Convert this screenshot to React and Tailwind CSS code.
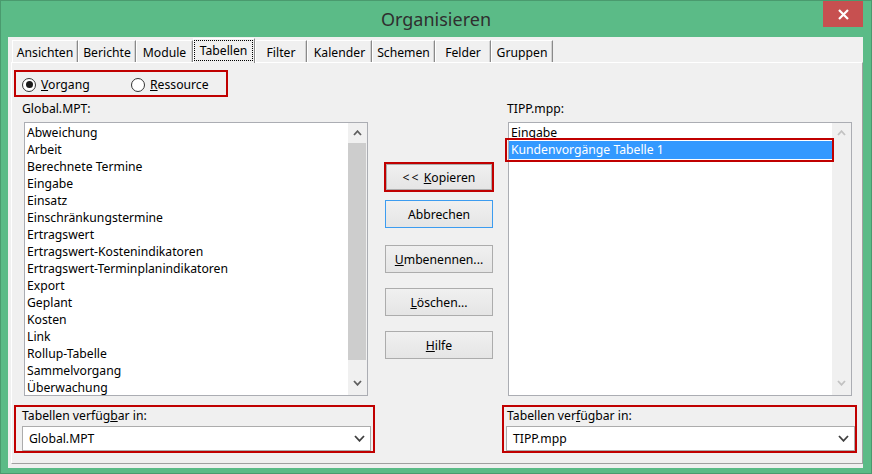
import React from "react";

function Chev({ up = false, color = "#606060", w = 9, h = 6, sw = 1.8 }) {
  return (
    <svg width={w} height={h} viewBox={`0 0 ${w} ${h}`} className="block">
      <polyline
        points={up ? `1,${h - 1} ${w / 2},1.2 ${w - 1},${h - 1}` : `1,1 ${w / 2},${h - 1.2} ${w - 1},1`}
        fill="none"
        stroke={color}
        strokeWidth={sw}
      />
    </svg>
  );
}

function Scrollbar({ disabled = false }) {
  const c = disabled ? "#c2c2c2" : "#5f5f5f";
  return (
    <div className="flex w-[19px] flex-col bg-[#f0f0f0]">
      <div className="flex h-[20px] items-center justify-center">
        <Chev up color={c} />
      </div>
      {!disabled && <div className="h-[217px] w-[18px] bg-[#cdcdcd]" />}
      <div className="flex flex-1 items-end justify-center pb-[9px]">
        <Chev color={c} />
      </div>
    </div>
  );
}

const leftItems = [
  "Abweichung",
  "Arbeit",
  "Berechnete Termine",
  "Eingabe",
  "Einsatz",
  "Einschränkungstermine",
  "Ertragswert",
  "Ertragswert-Kostenindikatoren",
  "Ertragswert-Terminplanindikatoren",
  "Export",
  "Geplant",
  "Kosten",
  "Link",
  "Rollup-Tabelle",
  "Sammelvorgang",
  "Überwachung",
];

function Btn({ children, className = "" }) {
  return (
    <div
      className={`flex items-center justify-center border bg-gradient-to-b from-[#f0f0f0] to-[#e5e5e5] ${className}`}
    >
      {children}
    </div>
  );
}

function Dropdown({ value }) {
  return (
    <div className="flex h-[25px] w-[349px] items-center justify-between border border-[#acacac] bg-white pl-[6px] pr-[5px]">
      <span>{value}</span>
      <Chev color="#404040" w={11} h={7} />
    </div>
  );
}

function Tab({ label, w }) {
  return (
    <div
      className="flex h-[22px] items-center justify-center border-l border-t border-r border-l-white border-t-white border-r-[#8a8a8a] pt-[2px] shadow-[inset_-1px_0_0_#d2d2d2]"
      style={{ width: w }}
    >
      {label}
    </div>
  );
}

export default function App() {
  return (
    <div className="flex h-[474px] w-[872px] flex-col border border-[#4a9a6e] bg-[#5bbb87] font-['Noto_Sans',sans-serif] text-[12.2px] leading-[17px] text-black">
      {/* title bar */}
      <div className="grid h-[36px] grid-cols-[1fr_auto_1fr]">
        <div />
        <div className="flex items-center text-[18px] text-[#2f2f2f]">Organisieren</div>
        <div className="flex justify-end pr-[8px]">
          <div className="flex h-[26px] w-[40px] items-center justify-center bg-[#c75050]">
            <svg width="11" height="11" viewBox="0 0 11 11">
              <path d="M1 1 L10 10 M10 1 L1 10" stroke="white" strokeWidth="2.2" />
            </svg>
          </div>
        </div>
      </div>

      {/* client */}
      <div className="ml-[7px] flex h-[431px] w-[855px] flex-col bg-[#f0f0f0]">
        {/* tabs */}
        <div className="flex h-[25px] items-end pl-[4px]">
          <Tab label="Ansichten" w={66} />
          <Tab label="Berichte" w={58} />
          <Tab label="Module" w={57} />
          <div className="relative z-10 -mb-px flex h-[25px] w-[62px] flex-col border-l border-t border-r border-l-white border-t-white border-r-[#8a8a8a] bg-[#f0f0f0]">
            <div className="mr-[1px] mt-[1px] flex h-[21px] items-center justify-center border border-dotted border-black">
              Tabellen
            </div>
          </div>
          <Tab label="Filter" w={52} />
          <Tab label="Kalender" w={65} />
          <Tab label="Schemen" w={63} />
          <Tab label="Felder" w={56} />
          <Tab label="Gruppen" w={62} />
        </div>

        {/* tab page */}
        <div className="ml-[3px] flex h-[402px] w-[852px] flex-col border border-b-[#a0a0a0] border-l-white border-r-[#a0a0a0] border-t-white">
          {/* radio group */}
          <div className="ml-[2px] mt-[7px] flex h-[27px] w-[214px] items-center border-2 border-[#c00000] pl-[6px] pt-[2px]">
            <div className="flex w-[109px] items-center">
              <div className="flex h-[14px] w-[14px] items-center justify-center rounded-full border border-[#333] bg-white">
                <div className="h-[7px] w-[7px] rounded-full bg-[#1a1a1a]" />
              </div>
              <span className="ml-[5px]">
                <u>V</u>organg
              </span>
            </div>
            <div className="flex items-center">
              <div className="h-[14px] w-[14px] rounded-full border border-[#333] bg-white" />
              <span className="ml-[5px]">
                <u>R</u>essource
              </span>
            </div>
          </div>

          {/* main */}
          <div className="flex">
            {/* left column */}
            <div className="ml-[2px] flex w-[361px] flex-col">
              <div className="h-[25px] pl-[8px] pt-[3px]">Global.MPT:</div>
              <div className="ml-[10px] flex h-[274px] w-[344px] border border-[#abadb3] bg-white">
                <div className="flex flex-1 flex-col pt-[1px]">
                  {leftItems.map((t) => (
                    <div key={t} className="h-[17px] pl-[2px]">
                      {t}
                    </div>
                  ))}
                </div>
                <Scrollbar />
              </div>
              <div className="mt-[9px] flex h-[48px] w-[361px] flex-col border-2 border-[#c00000]">
                <div className="h-[17px] pl-[6px]">
                  Tabellen verfüg<u>b</u>ar in:
                </div>
                <div className="ml-[6px] mt-[2px]">
                  <Dropdown value="Global.MPT" />
                </div>
              </div>
            </div>

            {/* middle column */}
            <div className="ml-[9px] flex w-[110px] flex-col pt-[65px]">
              <div className="h-[30px] w-[110px] border-2 border-[#c00000]">
                <Btn className="h-full w-full border-[#acacac]">
                  <span className="tracking-[2px]">&lt;&lt;</span>&nbsp;<u>K</u>opieren
                </Btn>
              </div>
              <Btn className="ml-[1px] mt-[8px] h-[28px] w-[108px] border-[#3c9cf0]">Abbrechen</Btn>
              <Btn className="ml-[1px] mt-[17px] h-[28px] w-[108px] border-[#acacac]">
                <span>
                  <u>U</u>mbenennen...
                </span>
              </Btn>
              <Btn className="ml-[1px] mt-[15px] h-[28px] w-[108px] border-[#acacac]">
                <span>
                  <u>L</u>öschen...
                </span>
              </Btn>
              <Btn className="ml-[1px] mt-[15px] h-[28px] w-[108px] border-[#acacac]">
                <span>
                  <u>H</u>ilfe
                </span>
              </Btn>
            </div>

            {/* right column */}
            <div className="ml-[8px] flex w-[355px] flex-col">
              <div className="h-[25px] pl-[5px] pt-[3px]">TIPP.mpp:</div>
              <div className="ml-[6px] flex h-[274px] w-[344px] border border-[#abadb3] bg-white">
                <div className="flex flex-1 flex-col pt-[1px]">
                  <div className="h-[17px] pl-[2px]">Eingabe</div>
                  <div className="relative h-[18px] bg-[#3399ff] pl-[2px] text-white">
                    Kundenvorgänge Tabelle 1
                    <div className="absolute -bottom-[3px] -left-[4px] -right-[2px] -top-[3px] border-2 border-[#c00000]" />
                  </div>
                </div>
                <Scrollbar disabled />
              </div>
              <div className="mt-[9px] flex h-[48px] w-[355px] flex-col border-2 border-[#c00000]">
                <div className="h-[17px] pl-[3px]">
                  Tabellen ver<u>f</u>ügbar in:
                </div>
                <div className="ml-[2px] mt-[2px]">
                  <Dropdown value="TIPP.mpp" />
                </div>
              </div>
            </div>
          </div>
        </div>
      </div>
    </div>
  );
}
